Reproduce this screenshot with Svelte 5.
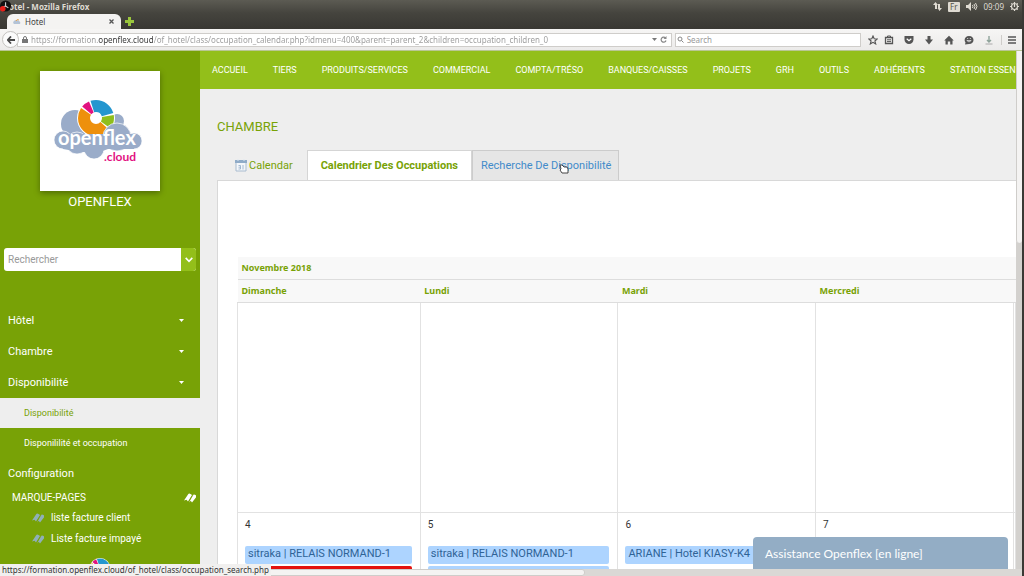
<script>
  const url =
    'https://formation.openflex.cloud/of_hotel/class/occupation_calendar.php?idmenu=400&parent=parent_2&children=occupation_children_0';

  const navLinks = [
    'ACCUEIL',
    'TIERS',
    'PRODUITS/SERVICES',
    'COMMERCIAL',
    'COMPTA/TRÉSO',
    'BANQUES/CAISSES',
    'PROJETS',
    'GRH',
    'OUTILS',
    'ADHÉRENTS',
    'STATION ESSEN'
  ];

  const menus = ['Hôtel', 'Chambre', 'Disponibilité'];
  const bookmarks = ['liste facture client', 'Liste facture impayé'];
  const days = ['Dimanche', 'Lundi', 'Mardi', 'Mercredi', ''];

  const week = [
    { day: 4, events: [{ label: 'sitraka | RELAIS NORMAND-1' }, { label: '', color: 'red' }] },
    { day: 5, events: [{ label: 'sitraka | RELAIS NORMAND-1' }, { label: '' }] },
    { day: 6, events: [{ label: 'ARIANE | Hotel KIASY-K4' }] },
    { day: 7, events: [] },
    { day: '', events: [] }
  ];

  let search = '';
  let webSearch = '';
</script>

{#snippet ring()}
  <circle cx="56" cy="47" r="19" fill="#fff" />
  <g fill="none" stroke-width="12" transform="rotate(-90 56 47)">
    <circle cx="56" cy="47" r="12" pathLength="360" stroke="#e2127f" stroke-dasharray="27 333" stroke-dashoffset="-310" />
    <circle cx="56" cy="47" r="12" pathLength="360" stroke="#2496cf" stroke-dasharray="92 268" stroke-dashoffset="18" />
    <circle cx="56" cy="47" r="12" pathLength="360" stroke="#8fbe1c" stroke-dasharray="46 314" stroke-dashoffset="-80" />
    <circle cx="56" cy="47" r="12" pathLength="360" stroke="#ee900c" stroke-dasharray="172 188" stroke-dashoffset="-132" />
  </g>
{/snippet}

{#snippet tagIcon()}
  <svg class="tag" viewBox="0 0 12 10" aria-hidden="true">
    <path d="M0 7.500 4 1.500q1-1.500 2.500-.5L8 2 4 8.500 2.500 6.800z" fill="currentColor" />
    <path d="M5 9.500 9 2q1-1 2.500 0t0 3L8 9.500 6.800 7.700z" fill="currentColor" />
    <path d="m4.500 9 4.500-7" stroke="#78a206" stroke-width=".5" />
  </svg>
{/snippet}

<div class="window">
  <header class="titlebar">
    <svg class="recorder" viewBox="0 0 14 13" aria-hidden="true">
      <circle cx="6" cy="6" r="6" fill="#111" />
      <path d="M6 6V2M6 6l3 2M6 6 3 7" stroke="#ccc" stroke-width="1.2" />
      <circle cx="3" cy="9" r="3" fill="#e8201a" />
    </svg>
    <span class="title">otel - Mozilla Firefox</span>
    <div class="tray">
      <svg width="9" height="9" viewBox="0 0 9 9" aria-hidden="true">
        <path d="M2 7V3H0l2.500-3L5 3H4v4zM5 2h2v4h2L6.500 9 4.500 6H5z" fill="#dfdbd2" />
      </svg>
      <span class="lang">Fr</span>
      <svg width="12" height="9" viewBox="0 0 12 9" aria-hidden="true">
        <path d="M0 3h2l3-3v9L2 6H0z" fill="#dfdbd2" />
        <path d="M6.500 3q1 1.500 0 3M8 2q2 2.500 0 5M9.500 1q3 3.500 0 7" fill="none" stroke="#dfdbd2" />
      </svg>
      <span>09:09</span>
      <svg width="9" height="9" viewBox="0 0 9 9" aria-hidden="true">
        <circle cx="4.500" cy="4.500" r="3" fill="none" stroke="#dfdbd2" stroke-width="1.200" />
        <path d="M4.500 0v5M0 4.500h2M7 4.500h2M1.300 1.300l1 1M7.700 1.300l-1 1M1.300 7.700l1-1M7.700 7.700l-1-1M4.500 7v2" stroke="#dfdbd2" stroke-width="1.200" />
      </svg>
    </div>
  </header>

  <div class="tabstrip">
    <div class="browser-tab">
      <svg width="8" height="7" viewBox="0 0 8 7" aria-hidden="true">
        <path d="M1 6a2 2 0 0 1 0-3 3 2 0 0 1 5 0q2 1 1 3z" fill="#b4c3d6" />
        <path d="M3 3a2 2 0 0 1 3-1" stroke="#e8a24a" fill="none" />
      </svg>
      <span>Hotel</span>
      <button aria-label="Close tab">
        <svg width="5" height="5" viewBox="0 0 5 5"><path d="m.5.5 4 4m0-4-4 4" stroke="#555" stroke-width="1.300" /></svg>
      </button>
    </div>
    <button class="new-tab" aria-label="New tab">
      <svg width="9" height="9" viewBox="0 0 9 9"><path d="M3 0h3v3h3v3H6v3H3V6H0V3h3z" fill="#9ac63c" /></svg>
    </button>
  </div>

  <div class="toolbar">
    <button class="back" aria-label="Back">
      <svg width="8" height="8" viewBox="0 0 8 8"><path d="M4 .5.800 4 4 7.500M1 4h7" fill="none" stroke="#4a4a4a" stroke-width="1.800" /></svg>
    </button>
    <div class="field address">
      <svg width="6" height="7" viewBox="0 0 6 7" aria-hidden="true">
        <path d="M1.500 3V2a1.500 1.500 0 0 1 3 0v1" fill="none" stroke="#777" />
        <path d="M0 3h6v4H0z" fill="#777" />
      </svg>
      <input aria-label="Address" value={url} readonly />
      <svg width="5" height="3" viewBox="0 0 5 3" aria-hidden="true"><path d="M0 0h5L2.500 3z" fill="#777" /></svg>
      <button aria-label="Reload">
        <svg width="7" height="7" viewBox="0 0 7 7"><path d="M5.500 2A2.500 2.500 0 1 0 6 4.500" fill="none" stroke="#888" stroke-width="1.200" /><path d="M6.500 0v3h-3z" fill="#888" /></svg>
      </button>
    </div>
    <div class="field websearch">
      <svg width="7" height="7" viewBox="0 0 7 7" aria-hidden="true"><circle cx="3" cy="3" r="2" fill="none" stroke="#888" /><path d="m4.500 4.500 2 2" stroke="#888" /></svg>
      <input aria-label="Web search" placeholder="Search" bind:value={webSearch} />
    </div>
    <div class="tools">
      <button aria-label="Bookmark this page">
        <svg viewBox="0 0 10 10"><path d="m5 1 1.200 2.800 3 .2-2.300 2 .8 3L5 7.400 2.300 9l.8-3L.8 4l3-.2z" fill="none" stroke="#555" stroke-width="1.100" /></svg>
      </button>
      <button class="clip" aria-label="Bookmarks">
        <svg viewBox="0 0 10 10"><path d="M1.500 2.500h7v6h-7z" fill="none" stroke="#555" stroke-width="1.300" /><path d="M3.500 3V1h3v2M3 4.800h4M3 6.600h4" fill="none" stroke="#555" /></svg>
      </button>
      <button aria-label="Pocket">
        <svg viewBox="0 0 10 10"><path d="M.5 1h9v3.500a4.500 4.500 0 0 1-9 0z" fill="#555" /><path d="m2.700 3.700 2.300 2 2.300-2" fill="none" stroke="#fff" stroke-width="1.200" /></svg>
      </button>
      <button aria-label="Downloads">
        <svg viewBox="0 0 10 10"><path d="M3.500 1h3v3.500H9L5 9.500 1 4.500h2.500z" fill="#555" /></svg>
      </button>
      <button aria-label="Home">
        <svg viewBox="0 0 10 10"><path d="M5 .8 9.800 5.500H8.500v4h-2.300V6.500H3.800v3H1.500v-4H.2z" fill="#555" /></svg>
      </button>
      <button aria-label="Chat">
        <svg viewBox="0 0 10 10"><path d="M5 1c6 0 6 8 0 8L1 9.500 1.500 7.500C-.5 5 1 1 5 1z" fill="#555" /><path d="M2.800 5.500q2.200 3 4.400 0zM3 3.500h1.200M5.800 3.500H7" stroke="#eee" stroke-width=".7" fill="none" /></svg>
      </button>
      <button aria-label="Download helper">
        <svg viewBox="0 0 10 10"><path d="M5 1v6M3 5l2 2 2-2" fill="none" stroke="#8fa39a" stroke-width="1.400" /><path d="M1.500 9h7" stroke="#aaa" /></svg>
      </button>
      <button class="burger" aria-label="Menu">
        <svg viewBox="0 0 10 10"><path d="M1 2h8M1 5h8M1 8h8" stroke="#555" stroke-width="1.500" /></svg>
      </button>
    </div>
  </div>

  <div class="viewport">
    <div class="page">
      <aside class="sidebar">
        <svg class="logo" viewBox="0 0 120 120" role="img" aria-label="openflex.cloud">
          <g fill="#9aacc9">
            <circle cx="35" cy="53" r="14" />
            <circle cx="77" cy="50" r="7" />
          </g>
          {@render ring()}
          <g fill="#9aacc9" stroke="#fff" stroke-width=".7">
            <circle cx="77" cy="66" r="14" />
            <circle cx="54" cy="78" r="10" />
            <circle cx="37" cy="72" r="11" />
            <circle cx="23" cy="69" r="9" />
            <circle cx="94" cy="70" r="8" />
          </g>
          <path d="M23 63h71v15H68l-8 3H40l-17-3z" fill="#9aacc9" />
          <text x="18" y="74" class="brand">openflex</text>
          <text x="64" y="90" class="cloud">.cloud</text>
        </svg>
        <p class="company">OPENFLEX</p>

        <div class="side-search">
          <input aria-label="Rechercher" placeholder="Rechercher" bind:value={search} />
          <button aria-label="Options de recherche">
            <svg width="8" height="6" viewBox="0 0 8 6"><path d="m.7.9 3.300 3.400L7.300.9" fill="none" stroke="#fff" stroke-width="1.600" /></svg>
          </button>
        </div>

        <nav class="menu" aria-label="Hôtel">
          {#each menus as menu}
            <button>
              {menu}
              <svg width="5" height="3" viewBox="0 0 5 3" aria-hidden="true"><path d="M0 0h5L2.500 3z" fill="#fff" /></svg>
            </button>
          {/each}
          <a class="sub current" href="#disponibilite">Disponibilité</a>
          <a class="sub" href="#occupation">Disponililité et occupation</a>
          <button>Configuration</button>
        </nav>

        <div class="marks-title">MARQUE-PAGES {@render tagIcon()}</div>
        <ul class="marks">
          {#each bookmarks as bookmark}
            <li>{@render tagIcon()}<a href="#facture">{bookmark}</a></li>
          {/each}
        </ul>
        <svg class="badge" viewBox="36 28 40 40" aria-hidden="true">{@render ring()}</svg>
      </aside>

      <main>
        <nav class="topnav">
          {#each navLinks as link}
            <a href="#nav">{link}</a>
          {/each}
        </nav>

        <h1>CHAMBRE</h1>

        <div class="tabs">
          <a class="tab calendar" href="#calendar">
            <svg width="12" height="13" viewBox="0 0 12 13" aria-hidden="true">
              <path d="M1 3h10v9H1z" fill="#f3f6fa" stroke="#a9bccf" />
              <path d="M0 1h12v3H0z" fill="#8fabc8" />
              <path d="M3 0v2M9 0v2" stroke="#dfe8f1" />
              <path d="M3.500 6.500h2v3.500h-2M3.500 8.200h2M8 6v4.500" fill="none" stroke="#8fabc8" stroke-width=".8" />
            </svg>
            Calendar
          </a>
          <a class="tab active" href="#occupations">Calendrier Des Occupations</a>
          <a class="tab hovered" href="#recherche">
            Recherche De Disponibilité
            <svg class="pointer" viewBox="0 0 10 10" aria-hidden="true">
              <path d="M1 1h2l2 2h3l1 2v4H3L1 6l1-1z" fill="#fff" stroke="#333" stroke-width=".9" />
            </svg>
          </a>
        </div>

        <section class="panel">
          <table>
            <colgroup>
              <col class="first" />
              <col class="day" />
              <col class="day" />
              <col class="day" />
              <col />
            </colgroup>
            <thead>
              <tr><th colspan="5">Novembre 2018</th></tr>
              <tr>
                {#each days as day}
                  <th>{day}</th>
                {/each}
              </tr>
            </thead>
            <tbody>
              <tr class="blank">
                {#each days as _}
                  <td></td>
                {/each}
              </tr>
              <tr>
                {#each week as cell}
                  <td>
                    <span class="number">{cell.day}</span>
                    {#each cell.events as event}
                      <div class="event" class:red={event.color === 'red'}>{event.label}</div>
                    {/each}
                  </td>
                {/each}
              </tr>
            </tbody>
          </table>
        </section>
      </main>

      <button class="assist">Assistance Openflex [en ligne]</button>
    </div>
    <div class="vscroll"><div class="thumb"></div></div>
  </div>
  <div class="hscroll"><div class="thumb"></div></div>
  <div class="status">https://formation.openflex.cloud/of_hotel/class/occupation_search.php</div>
</div>

<style>
  :global(body) {
    margin: 0;
  }

  .window {
    position: relative;
    display: flex;
    flex-direction: column;
    height: 100vh;
    box-sizing: border-box;
    overflow: hidden;
    border-right: 2px solid #3a3935;
    background: #f1f0ef;
    font-family: 'Noto Sans', 'Open Sans', sans-serif;
    font-size: 8px;
    color: #555;
  }

  svg {
    display: block;
    flex: none;
  }

  button,
  input {
    border: 0;
    padding: 0;
    background: none;
    font: inherit;
    color: inherit;
  }

  a {
    color: inherit;
    text-decoration: none;
  }

  /* browser chrome */
  .titlebar {
    display: flex;
    align-items: center;
    height: 13px;
    background: linear-gradient(#5c5b53, #45443e);
    color: #dfdbd2;
  }

  .recorder {
    width: 13px;
    height: 13px;
    margin-right: -4px;
    z-index: 1;
  }

  .title {
    font-weight: bold;
  }

  .tray {
    display: flex;
    align-items: center;
    gap: 6px;
    margin-left: auto;
    margin-right: 3px;
  }

  .lang {
    padding: 0 2px;
    line-height: 10px;
    border-radius: 1px;
    background: #dfdbd2;
    color: #55544d;
  }

  .tabstrip {
    display: flex;
    align-items: center;
    height: 16px;
    background: linear-gradient(#45443e, #393833);
  }

  .browser-tab {
    display: flex;
    align-items: center;
    gap: 4px;
    width: 114px;
    height: 15px;
    margin: 1px 4px 0 7px;
    padding: 0 7px 0 6px;
    box-sizing: border-box;
    border-radius: 6px 6px 0 0;
    background: #f4f3f2;
    color: #444;
  }

  .browser-tab button {
    margin-left: auto;
  }

  .toolbar {
    display: flex;
    align-items: center;
    height: 21px;
    border-bottom: 1px solid #b9c694;
    background: linear-gradient(#f6f5f4, #ecebea);
  }

  .back {
    display: grid;
    place-items: center;
    width: 17px;
    height: 17px;
    margin-left: 2px;
    border: 1px solid #c4c2bf;
    border-radius: 50%;
    background: #fbfbfb;
    z-index: 1;
  }

  .field {
    display: flex;
    align-items: center;
    gap: 3px;
    height: 12px;
    border: 1px solid #cfcdca;
    background: #fff;
  }

  .field input {
    flex: 1;
    min-width: 0;
    height: 12px;
    outline: none;
  }

  .address {
    flex: 647;
    margin-left: -2px;
    padding: 0 4px;
  }

  /* the host name is darker than the rest of the address */
  .address input {
    background: linear-gradient(90deg, #999 67px, #333 67px 122px, #999 122px);
    background-clip: text;
    -webkit-text-fill-color: transparent;
  }

  .websearch {
    flex: 183;
    margin-left: 3px;
    padding: 0 1px;
  }

  .websearch input::placeholder {
    color: #999;
    opacity: 1;
  }

  .tools {
    display: flex;
    align-items: center;
    gap: 10px;
    margin: 0 5px 0 7px;
  }

  .tools svg {
    width: 10px;
    height: 10px;
  }

  .tools .clip {
    margin-left: -4px;
  }

  .burger {
    padding-left: 5px;
    margin-left: -3px;
    border-left: 1px solid #cfcdca;
  }

  .viewport {
    display: flex;
    flex: 1;
    min-height: 0;
  }

  .vscroll {
    width: 6px;
    background: #d3d1ce;
  }

  .vscroll .thumb {
    height: 37%;
    border-radius: 0 0 3px 3px;
    background: #f4f3f2;
    box-shadow: inset 1px 0 #cfcdca;
  }

  .hscroll {
    height: 7px;
    background: #dad8d5;
  }

  .hscroll .thumb {
    width: 57%;
    height: 5px;
    border: 1px solid #cfcdca;
    border-radius: 0 3px 3px 0;
    background: #f4f3f2;
  }

  .status {
    position: absolute;
    left: 0;
    bottom: 0;
    padding: 0 2px;
    line-height: 12px;
    background: #f1f0ef;
    color: #333;
  }

  /* page */
  .page {
    position: relative;
    display: flex;
    flex: 1;
    min-width: 0;
    overflow: hidden;
    background: #eee;
    font-family: Roboto, sans-serif;
    font-size: 10px;
  }

  .sidebar {
    flex: none;
    width: 200px;
    background: #78a206;
    color: #fff;
  }

  .logo {
    width: 120px;
    height: 120px;
    margin: 20px auto 0;
    background: #fff;
    box-shadow: 0 2px 6px rgba(0, 0, 0, 0.35);
  }

  .brand {
    font: bold 20px Lato, sans-serif;
    fill: #fff;
  }

  .cloud {
    font: bold 12px Lato, sans-serif;
    fill: #e2127f;
  }

  .company {
    margin: 2px 0 0;
    font-size: 13px;
    line-height: 18px;
    text-align: center;
  }

  .side-search {
    display: flex;
    height: 23px;
    margin: 37px 4px 0;
    border-radius: 3px;
    overflow: hidden;
    background: #fff;
  }

  .side-search input {
    flex: 1;
    min-width: 0;
    padding: 0 4px;
    color: #555;
    font-size: 10px;
  }

  .side-search input::placeholder {
    color: #999;
    opacity: 1;
  }

  .side-search button {
    display: grid;
    place-items: center;
    width: 15px;
    background: #93bf1a;
  }

  .menu {
    display: flex;
    flex-direction: column;
    margin-top: 34px;
  }

  .menu button {
    display: flex;
    align-items: center;
    justify-content: space-between;
    padding: 0 16px 0 8px;
    font-size: 11px;
    line-height: 31px;
  }

  .menu .sub {
    padding-left: 24px;
    font-size: 9px;
    line-height: 30px;
  }

  .menu .current {
    background: #eee;
    color: #78a206;
  }

  .marks-title {
    display: flex;
    align-items: center;
    justify-content: space-between;
    padding: 0 4px 0 12px;
    line-height: 18px;
  }

  .marks {
    margin: 0;
    padding: 0 0 0 32px;
    list-style: none;
    line-height: 21px;
  }

  .marks li {
    display: flex;
    align-items: center;
    gap: 7px;
  }

  .marks .tag {
    color: #8fb0b8;
  }

  .tag {
    width: 12px;
    height: 10px;
  }

  .badge {
    width: 22px;
    height: 22px;
    margin: 9px auto 0;
  }

  main {
    flex: 1;
    min-width: 0;
  }

  .topnav {
    display: flex;
    gap: 25px;
    padding-left: 12px;
    overflow: hidden;
    background: #93bf1a;
    color: #fff;
    font-size: 9px;
    line-height: 38px;
    white-space: nowrap;
  }

  h1 {
    margin: 28px 0 0 17px;
    font-size: 13px;
    font-weight: normal;
    line-height: 20px;
    color: #78a206;
  }

  .tabs {
    display: flex;
    align-items: flex-end;
    margin: 13px 0 0 17px;
  }

  .tab {
    display: flex;
    align-items: center;
    height: 29px;
    border: 1px solid transparent;
    border-bottom: 0;
    color: #78a206;
    font-size: 11px;
    white-space: nowrap;
  }

  .calendar {
    gap: 2px;
    padding: 0 13px 0 17px;
  }

  .active {
    padding: 0 13px;
    border-color: #d5d5d5;
    background: #fff;
    font-weight: bold;
  }

  .hovered {
    position: relative;
    padding: 0 7px 0 8px;
    border-color: #ccc;
    background: #e6e6e6;
    color: #428bca;
  }

  .pointer {
    position: absolute;
    right: 49px;
    bottom: 6px;
    width: 10px;
    height: 10px;
  }

  .panel {
    margin-left: 17px;
    padding: 76px 0 0 19px;
    border: solid #d8d8d8;
    border-width: 1px 0 0 1px;
    background: #fff;
  }

  table {
    width: 100%;
    table-layout: fixed;
    border-collapse: collapse;
  }

  .first {
    width: 23.5%;
  }

  .day {
    width: 25.4%;
  }

  th {
    height: 20px;
    padding: 0 4px 2px;
    border-bottom: 1px solid #ddd;
    background: #f8f8f8;
    color: #78a206;
    font: bold 9px 'Noto Sans', sans-serif;
    text-align: left;
  }

  td {
    height: 50px;
    padding: 0 8px 0 7px;
    border: 1px solid #e2e2e2;
    vertical-align: top;
    color: #333;
    overflow: hidden;
  }

  .blank td {
    height: 209px;
  }

  .number {
    display: block;
    height: 33px;
    line-height: 23px;
  }

  .event {
    height: 18px;
    margin-bottom: 2px;
    padding: 0 3px;
    border-radius: 2px;
    background: #add4ff;
    color: #2f6396;
    font-size: 11px;
    line-height: 16px;
    white-space: nowrap;
  }

  .red {
    background: #e3120f;
  }

  .assist {
    position: absolute;
    right: 8px;
    bottom: 0;
    width: 255px;
    height: 32px;
    padding: 0 12px;
    border-radius: 4px 4px 0 0;
    background: #93adc5;
    color: #fff;
    font: 12px Lato, sans-serif;
    text-align: left;
  }
</style>
